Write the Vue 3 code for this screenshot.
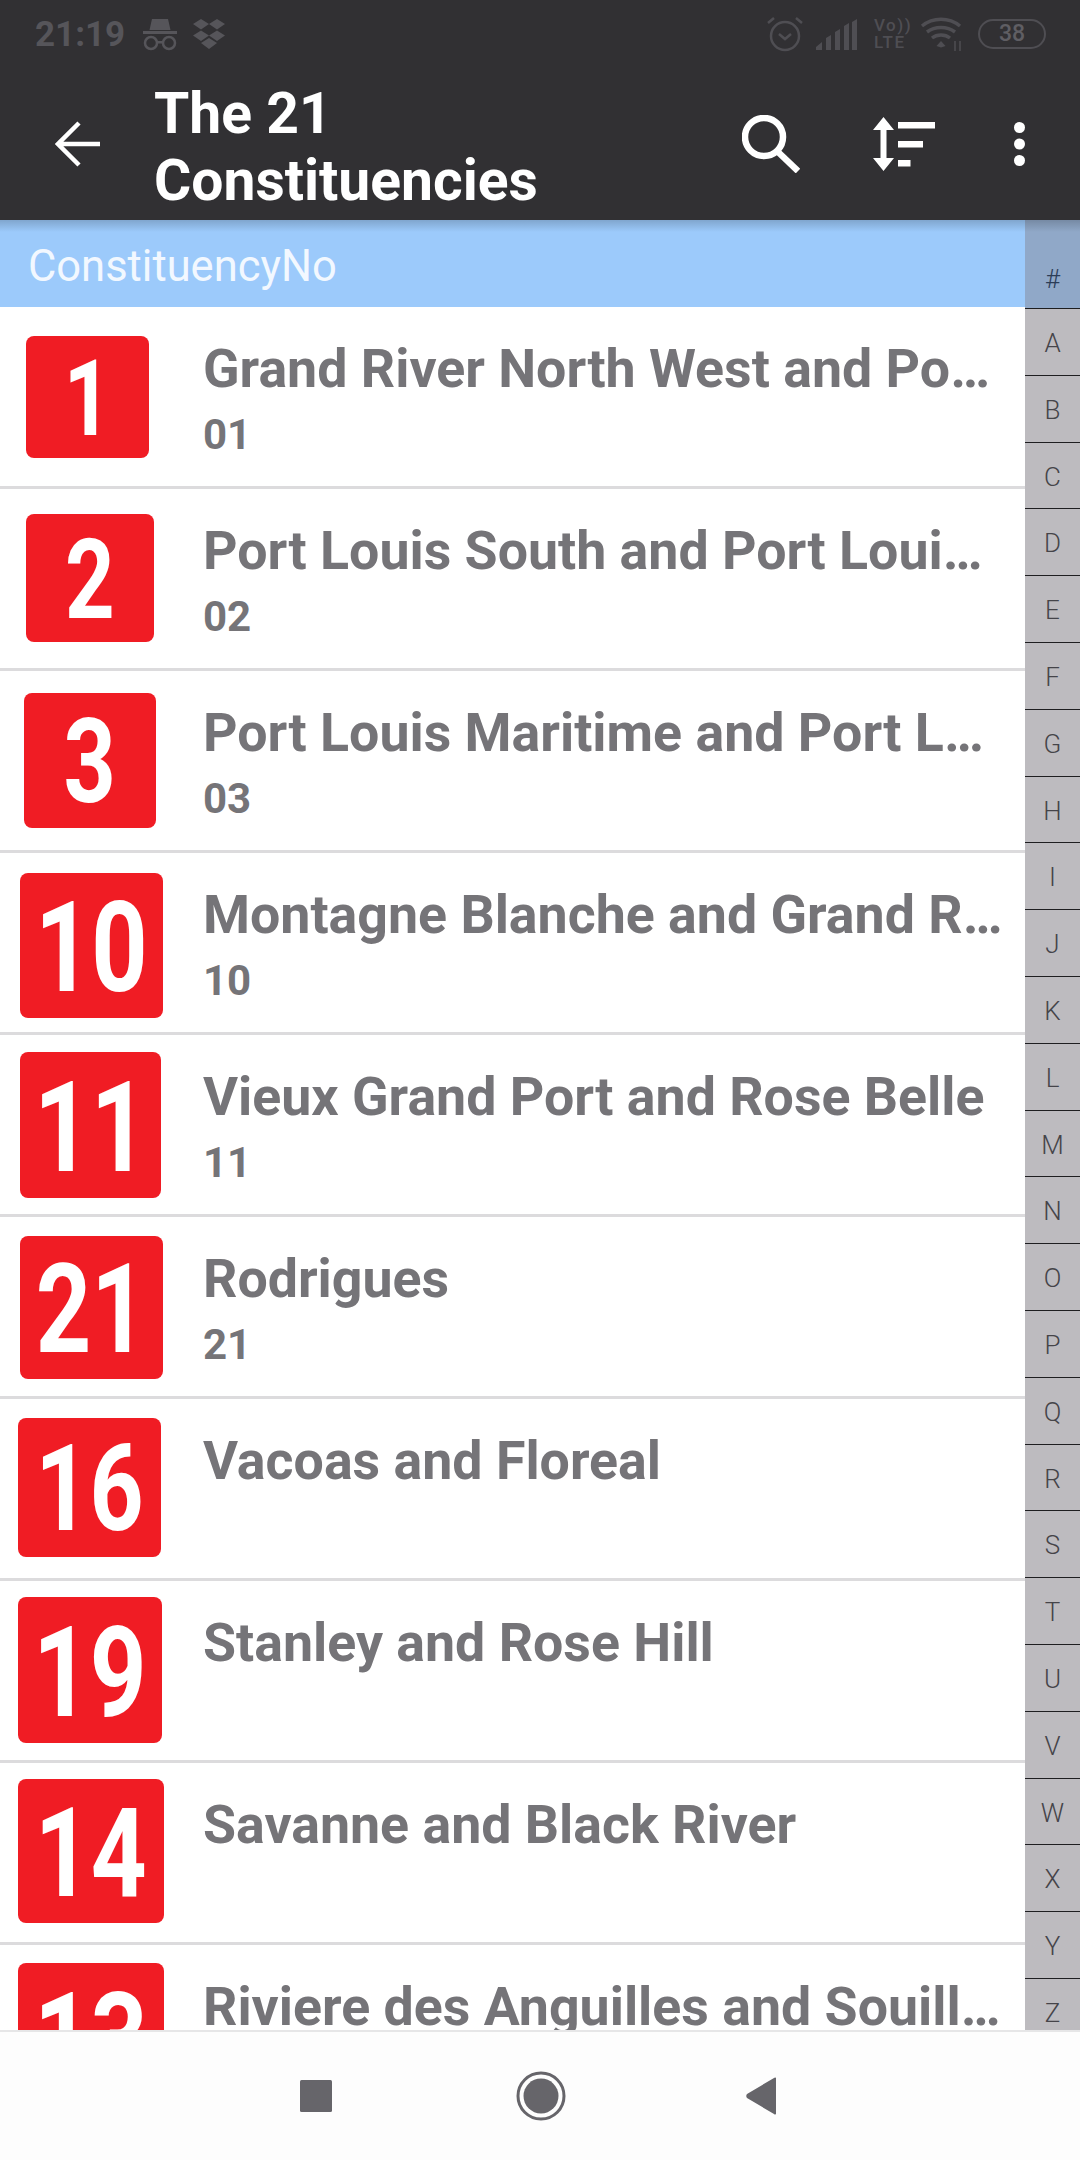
<template>
  <div class="screen">
    <header class="appbar">
      <div class="status">
        <span class="time">21:19</span>
        <svg class="st-ico" width="36" height="34" viewBox="0 0 36 34" fill="#56555a">
          <path d="M10 2h16l2.500 11h-21z"></path>
          <rect x="1" y="14" width="34" height="3"></rect>
          <circle cx="9" cy="26" r="6" fill="none" stroke="#56555a" stroke-width="2.500"></circle>
          <circle cx="27" cy="26" r="6" fill="none" stroke="#56555a" stroke-width="2.500"></circle>
          <rect x="14" y="24" width="8" height="2.500"></rect>
        </svg>
        <svg class="st-ico drop" width="34" height="32" viewBox="0 0 34 32" fill="#56555a">
          <path d="M9 1l8 5-8 5.500-8-5.500zM25 1l8 5-8 5.500-8-5.500zM9 12.500l8 5-8 5.500-8-5.500zM25 12.500l8 5-8 5.500-8-5.500zM17 20l8 5-8 6-8-6z"></path>
        </svg>
        <div class="status-right">
          <svg width="36" height="36" viewBox="0 0 36 36" fill="none" stroke="#4f4e53" stroke-width="2.500">
            <circle cx="18" cy="20" r="14"></circle>
            <path d="M12 18l6 5 6-5M1 7l6-5M35 7l-6-5"></path>
          </svg>
          <svg class="signal" width="41" height="31" viewBox="0 0 41 31" fill="#4f4e53">
            <path d="M0 31v-3l6-5v8zM10 31V19l5-3v15zM19 31V13l5-3v21zM28 31V7l5-3v27zM36 31V3l5-3v31z"></path>
          </svg>
          <div class="volte"><span>Vo))</span><span>LTE</span></div>
          <svg class="wifi" width="42" height="34" viewBox="0 0 42 34" fill="none" stroke="#4f4e53" stroke-width="3.500">
            <path d="M2 9c11-9 27-9 38 0M7 15c8-6 20-6 28 0M12 21c5-4 13-4 18 0"></path>
            <path d="M21 24l4.500 5-4.500 1.500-4.500-1.500z" fill="#4f4e53" stroke="none"></path>
            <path d="M35 24v10M40 24v10" stroke-width="1.500"></path>
          </svg>
          <div class="battery">38</div>
        </div>
      </div>
      <div class="toolbar">
        <svg class="back" width="46" height="46" viewBox="0 0 46 46" fill="none" stroke="#fff" stroke-width="4.500">
          <path d="M45 23H3M24 2L3 23l21 21"></path>
        </svg>
        <h1 class="title">The 21<br />Constituencies</h1>
        <svg class="search" width="58" height="58" viewBox="0 0 58 58" fill="none" stroke="#fff" stroke-width="6.500">
          <circle cx="22" cy="22" r="19"></circle>
          <path d="M35 36l21 20"></path>
        </svg>
        <svg class="sort" width="62" height="54" viewBox="0 0 62 54" fill="#fff">
          <path d="M10.500 0L21 13h-7.500v28H21L10.500 54 0 41h7.500V13H0z"></path>
          <rect x="25" y="5" width="37" height="6.500"></rect>
          <rect x="25" y="24" width="25" height="6.500"></rect>
          <rect x="25" y="43" width="12.500" height="6.500"></rect>
        </svg>
        <svg class="more" width="11" height="44" viewBox="0 0 11 44" fill="#fff">
          <circle cx="5.500" cy="5.500" r="5.500"></circle>
          <circle cx="5.500" cy="22" r="5.500"></circle>
          <circle cx="5.500" cy="38.500" r="5.500"></circle>
        </svg>
      </div>
    </header>

    <div class="content">
      <main class="list">
        <div class="section">ConstituencyNo</div>
        <div v-for="item in items" :key="item.num" class="row">
          <div class="thumb">
            <div class="badge" :style="badgeStyle(item)">
              <span class="digits">{{ item.num }}</span>
            </div>
          </div>
          <div class="info">
            <div class="name">{{ item.name }}</div>
            <div v-if="item.sub" class="sub">{{ item.sub }}</div>
          </div>
        </div>
      </main>
      <aside class="index">
        <div class="hash">#</div>
        <div v-for="l in letters" :key="l" class="letter">{{ l }}</div>
      </aside>
      <div class="shadow"></div>
    </div>

    <footer class="navbar">
      <svg width="32" height="32" viewBox="0 0 32 32"><rect width="32" height="32" rx="1.500" fill="#66656a"></rect></svg>
      <svg class="home" width="50" height="50" viewBox="0 0 50 50">
        <circle cx="25" cy="25" r="23" fill="none" stroke="#66656a" stroke-width="3"></circle>
        <circle cx="25" cy="25" r="17.500" fill="#66656a"></circle>
      </svg>
      <svg width="31" height="38" viewBox="0 0 31 38"><path d="M30 1.500v35c0 1-1 1.500-2 .5L1 21c-1-1-1-3 0-4L28 1c1-1 2-.5 2 .5z" fill="#66656a"></path></svg>
    </footer>
  </div>
</template>

<script setup>
// x / y: where the badge sits in its row, the source images all differ a bit
const items = [
  { num: 1, x: 26, y: 29, w: 123, h: 122, name: 'Grand River North West and Po…', sub: '01' },
  { num: 2, x: 26, y: 25, w: 128, h: 128, name: 'Port Louis South and Port Loui…', sub: '02' },
  { num: 3, x: 24, y: 22, w: 132, h: 135, name: 'Port Louis Maritime and Port L…', sub: '03' },
  { num: 10, x: 20, y: 20, w: 143, h: 145, name: 'Montagne Blanche and Grand R…', sub: '10' },
  { num: 11, x: 20, y: 17, w: 141, h: 146, name: 'Vieux Grand Port and Rose Belle', sub: '11' },
  { num: 21, x: 20, y: 19, w: 143, h: 143, name: 'Rodrigues', sub: '21' },
  { num: 16, x: 18, y: 19, w: 143, h: 139, name: 'Vacoas and Floreal' },
  { num: 19, x: 18, y: 16, w: 144, h: 146, name: 'Stanley and Rose Hill' },
  { num: 14, x: 18, y: 16, w: 146, h: 144, name: 'Savanne and Black River' },
  { num: 13, x: 18, y: 18, w: 146, h: 146, name: 'Riviere des Anguilles and Souill…' }
]

const letters = 'ABCDEFGHIJKLMNOPQRSTUVWXYZ'.split('')

const badgeStyle = (item) => ({
  marginLeft: item.x + 'px',
  marginTop: item.y + 'px',
  width: item.w + 'px',
  height: item.h + 'px',
  fontSize: Math.round(item.h * 0.87) + 'px'
})
</script>

<style>
html,
body {
  margin: 0;
  background: #fff;
}
</style>

<style scoped>
.screen {
  width: 1080px;
  height: 2160px;
  display: flex;
  flex-direction: column;
  overflow: hidden;
  font-family: Roboto, sans-serif;
  background: #fff;
}

.appbar {
  height: 220px;
  flex-shrink: 0;
  background: #313033;
  display: flex;
  flex-direction: column;
  position: relative;
  z-index: 2;
}

.status {
  height: 68px;
  padding: 0 34px 0 35px;
  display: flex;
  align-items: center;
}

.time {
  font-size: 35px;
  font-weight: 700;
  color: #56555a;
}

.st-ico {
  margin-left: 17px;
}

.drop {
  margin-left: 14px;
}

.status-right {
  margin-left: auto;
  display: flex;
  align-items: center;
}

.signal {
  margin-left: 13px;
}

.volte {
  margin-left: 17px;
  width: 34px;
  display: flex;
  flex-direction: column;
  font-size: 17px;
  line-height: 17px;
  letter-spacing: 1.500px;
  font-weight: 500;
  color: #4f4e53;
}

.wifi {
  margin-left: 12px;
}

.battery {
  margin-left: 16px;
  width: 68px;
  height: 30px;
  box-sizing: border-box;
  border: 2.500px solid #4f4e53;
  border-radius: 15px;
  text-align: center;
  font-size: 23px;
  line-height: 25px;
  font-weight: 500;
  color: #5f5e63;
}

.toolbar {
  flex: 1;
  display: flex;
  align-items: center;
  padding-left: 55px;
}

.title {
  margin: 5px 0 0 53px;
  flex: 1;
  font-size: 57px;
  line-height: 67px;
  font-weight: 700;
  color: #fff;
}

.sort {
  margin-left: 73px;
}

.more {
  margin-left: 79px;
  margin-right: 55px;
}

.content {
  flex: 1;
  min-height: 0;
  display: flex;
  position: relative;
  overflow: hidden;
}

.list {
  width: 1025px;
  flex-shrink: 0;
}

.section {
  height: 87px;
  box-sizing: border-box;
  padding-left: 28px;
  background: #9ccafb;
  color: #f2f8ff;
  font-size: 43.500px;
  line-height: 93px;
}

.row {
  height: 182px;
  box-sizing: border-box;
  border-bottom: 3px solid #dcdbdd;
  display: flex;
  background: #fff;
}

.thumb {
  width: 180px;
  flex-shrink: 0;
}

.badge {
  background: #f01c24;
  border-radius: 8px;
  display: flex;
  align-items: center;
  justify-content: center;
  font-weight: 700;
  color: #fff;
  line-height: 1;
}

.digits {
  display: block;
  transform: translateY(2px) scaleX(0.78);
}

.info {
  margin-left: 23px;
  min-width: 0;
  padding-top: 30px;
  color: #757478;
  font-weight: 700;
  white-space: nowrap;
}

.name {
  font-size: 53.700px;
  line-height: 64px;
}

.sub {
  font-size: 42px;
  line-height: 56px;
  margin-top: 6px;
}

.index {
  width: 55px;
  flex-shrink: 0;
  background: #bdbbbf;
  color: #454449;
  font-size: 26px;
  font-weight: 300;
}

.hash {
  height: 88px;
  box-sizing: border-box;
  padding-top: 35px;
  background: #90a8c8;
  text-align: center;
  line-height: 48px;
  color: #2c3d58;
}

.letter {
  height: 66.800px;
  box-sizing: border-box;
  border-top: 1px solid #1e1e20;
  text-align: center;
  line-height: 69px;
}

.shadow {
  position: absolute;
  left: 0;
  right: 0;
  top: 0;
  height: 12px;
  background: linear-gradient(rgba(0, 0, 0, 0.18), rgba(0, 0, 0, 0));
}

.navbar {
  height: 130px;
  flex-shrink: 0;
  box-sizing: border-box;
  border-top: 2px solid #e6e6e7;
  background: #fdfdfd;
  display: flex;
  align-items: center;
  padding: 0 303px 0 300px;
  justify-content: space-between;
  position: relative;
}

.home {
  margin-left: 3px;
}
</style>
